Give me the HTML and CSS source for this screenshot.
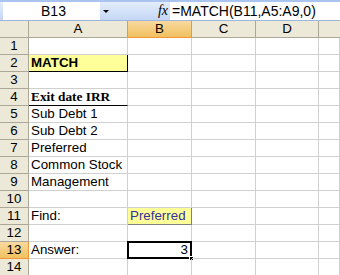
FILE: index.html
```html
<!DOCTYPE html>
<html>
<head>
	<title>MATCH</title>
	<link rel="stylesheet" href="styles.css">
</head>
<body>
<div class="formula-bar">
	<div class="name-box">B13</div>
	<div class="drop"><span class="arrow"></span></div>
	<div class="fx">fx</div>
	<div class="formula">=MATCH(B11,A5:A9,0)</div>
</div>
<div class="sheet">
	<div class="corner"></div>
	<div class="col-head">A</div>
	<div class="col-head sel">B</div>
	<div class="col-head">C</div>
	<div class="col-head">D</div>
	<div class="col-head last"></div>

	<div class="row-head">1</div><div class="cell"></div><div class="cell"></div><div class="cell"></div><div class="cell"></div><div class="cell"></div>
	<div class="row-head">2</div><div class="cell title">MATCH</div><div class="cell"></div><div class="cell"></div><div class="cell"></div><div class="cell"></div>
	<div class="row-head">3</div><div class="cell"></div><div class="cell"></div><div class="cell"></div><div class="cell"></div><div class="cell"></div>
	<div class="row-head">4</div><div class="cell caption">Exit date IRR</div><div class="cell"></div><div class="cell"></div><div class="cell"></div><div class="cell"></div>
	<div class="row-head">5</div><div class="cell">Sub Debt 1</div><div class="cell"></div><div class="cell"></div><div class="cell"></div><div class="cell"></div>
	<div class="row-head">6</div><div class="cell">Sub Debt 2</div><div class="cell"></div><div class="cell"></div><div class="cell"></div><div class="cell"></div>
	<div class="row-head">7</div><div class="cell">Preferred</div><div class="cell"></div><div class="cell"></div><div class="cell"></div><div class="cell"></div>
	<div class="row-head">8</div><div class="cell">Common Stock</div><div class="cell"></div><div class="cell"></div><div class="cell"></div><div class="cell"></div>
	<div class="row-head">9</div><div class="cell">Management</div><div class="cell"></div><div class="cell"></div><div class="cell"></div><div class="cell"></div>
	<div class="row-head">10</div><div class="cell"></div><div class="cell"></div><div class="cell"></div><div class="cell"></div><div class="cell"></div>
	<div class="row-head">11</div><div class="cell">Find:</div><div class="cell input">Preferred</div><div class="cell"></div><div class="cell"></div><div class="cell"></div>
	<div class="row-head">12</div><div class="cell"></div><div class="cell"></div><div class="cell"></div><div class="cell"></div><div class="cell"></div>
	<div class="row-head sel">13</div><div class="cell">Answer:</div><div class="cell active">3<span class="handle"></span></div><div class="cell"></div><div class="cell"></div><div class="cell"></div>
	<div class="row-head">14</div><div class="cell"></div><div class="cell"></div><div class="cell"></div><div class="cell"></div><div class="cell"></div>
</div>
</body>
</html>
```
FILE: styles.css
```css
* {
	margin: 0;
	padding: 0;
	box-sizing: border-box;
}
body {
	width: 340px;
	height: 275px;
	overflow: hidden;
	background: #fff;
	font-family: "Liberation Sans", Arial, sans-serif;
	font-size: 13.33px;
	color: #000;
}
.formula-bar {
	display: flex;
	height: 21px;
	background: linear-gradient(#e3edfc, #c4d7f5);
	border-top: 2px solid #a9c4ef;
	border-bottom: 1px solid #9eb6de;
}
.name-box {
	width: 97px;
	background: #fff;
	margin-left: 3px;
	text-align: center;
	line-height: 18px;
	font-size: 14px;
	padding-left: 4px;
}
.drop {
	width: 22px;
	position: relative;
}
.arrow {
	position: absolute;
	left: 3px;
	top: 8px;
	border-left: 3px solid transparent;
	border-right: 3px solid transparent;
	border-top: 3px solid #000;
}
.fx {
	width: 48px;
	text-align: right;
	padding-right: 2px;
	font-family: "Liberation Serif", serif;
	font-style: italic;
	font-size: 14px;
	line-height: 18px;
}
.formula {
	flex: 1;
	background: #fff;
	padding-left: 2px;
	line-height: 18px;
	font-size: 14px;
}
.sheet {
	display: grid;
	grid-template-columns: 29px 99px 64px 64px 63px 1fr;
	grid-auto-rows: 17px;
}
.corner, .col-head, .row-head {
	background: #ece9d8;
	border-right: 1px solid #aca899;
	border-bottom: 1px solid #aca899;
	text-align: center;
	line-height: 16px;
}
.col-head.last {
	border-right: none;
}
.sel {
	background: linear-gradient(#f9d99f, #f1c15f);
	border-right-color: #f29536;
	border-bottom-color: #f29536;
}
.cell {
	border-right: 1px solid #d0d0d0;
	border-bottom: 1px solid #d0d0d0;
	line-height: 16px;
	padding-left: 2px;
	white-space: nowrap;
	position: relative;
}
.title {
	background: #ffff99;
	font-weight: bold;
	border: 1px solid #000;
	border-top: none;
	border-left: none;
}
.caption {
	font-family: "Liberation Serif", serif;
	font-weight: bold;
	border-bottom: 1px solid #000;
}
.input {
	background: #ffff99;
	color: #333399;
	border: 1px solid #808080;
	border-top: none;
	border-left: none;
}
.active {
	text-align: right;
	padding-right: 2px;
	border: 2px solid #000;
	margin: -1px 0 0 -1px;
	line-height: 14px;
}
.handle {
	position: absolute;
	right: -4px;
	bottom: -4px;
	width: 5px;
	height: 5px;
	background: #000;
	border: 1px solid #fff;
}
```
